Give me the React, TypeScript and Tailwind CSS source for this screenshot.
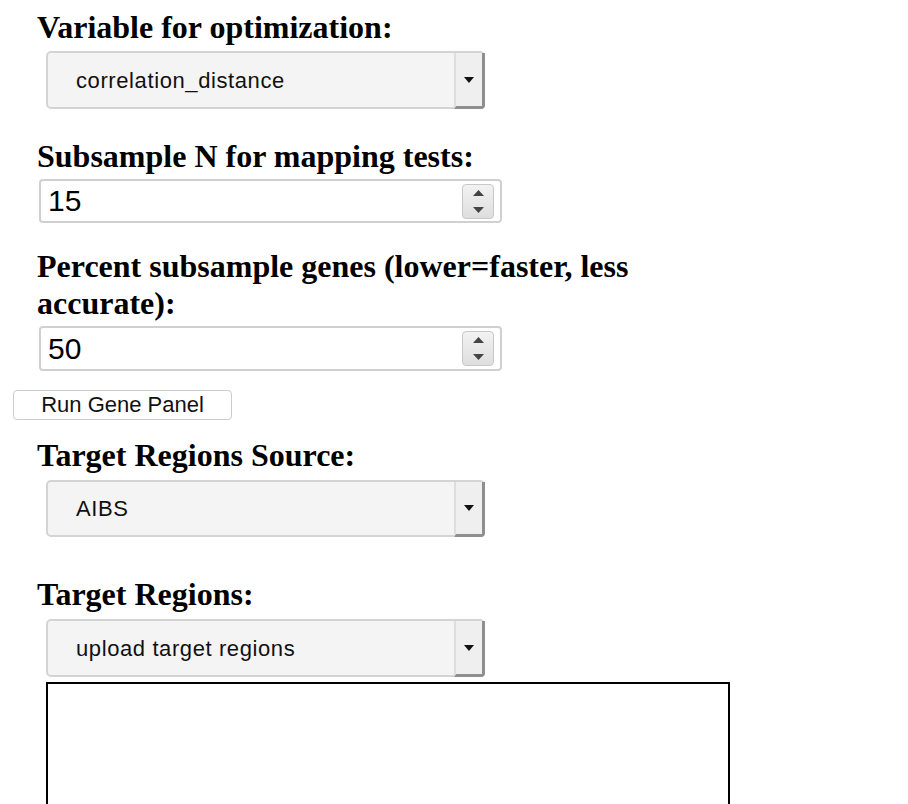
import React from 'react';

const headingClass =
  "ml-[37px] font-['Liberation_Serif',serif] text-[32px] leading-[37px] font-bold text-black";

const SelectBox: React.FC<{ value: string; className?: string }> = ({ value, className }) => (
  <div
    className={`ml-[46px] w-[439px] h-[58px] flex items-stretch rounded-[5px] border-2 border-[#d4d4d4] bg-[#f4f4f4] ${className ?? ''}`}
  >
    <div className="flex-1 flex items-center pl-[28px] font-['Liberation_Sans',Arial,sans-serif] text-[22px] tracking-[0.6px] text-[#111]">
      {value}
    </div>
    <div className="w-[31px] -mr-[2px] -mb-[2px] flex items-center justify-center border-l-2 border-l-[#dedede] border-r-[3px] border-b-[3px] border-r-[#8f8f8f] border-b-[#8f8f8f] rounded-br-[4px] bg-[#efefef]">
      <svg width="10" height="6" viewBox="0 0 10 6">
        <path d="M0 0h10L5 6z" fill="#111" />
      </svg>
    </div>
  </div>
);

const NumberBox: React.FC<{ value: string; className?: string }> = ({ value, className }) => (
  <div
    className={`ml-[39px] w-[463px] flex items-center justify-between rounded-[4px] border-2 border-[#d0d0d0] bg-white ${className ?? ''}`}
  >
    <span className="pl-[7px] font-['Liberation_Sans',Arial,sans-serif] text-[30px] leading-none text-black">
      {value}
    </span>
    <div className="mr-[6px] w-[32px] h-[35px] flex flex-col rounded-[4px] border border-[#c8c8c8] bg-gradient-to-b from-[#f2f2f2] to-[#dedede]">
      <div className="flex-1 flex items-center justify-center border-b border-[#e8e8e8]">
        <svg width="11" height="6" viewBox="0 0 11 6">
          <path d="M0 6L5.5 0l5.5 6z" fill="#444" />
        </svg>
      </div>
      <div className="flex-1 flex items-center justify-center">
        <svg width="11" height="6" viewBox="0 0 11 6">
          <path d="M0 0h11L5.5 6z" fill="#444" />
        </svg>
      </div>
    </div>
  </div>
);

export default function App() {
  return (
    <div className="w-[908px] h-[804px] overflow-hidden bg-white pt-[9px]">
      <h3 className={headingClass}>Variable for optimization:</h3>
      <SelectBox value="correlation_distance" className="mt-[5px]" />

      <h3 className={`${headingClass} mt-[29px]`}>Subsample N for mapping tests:</h3>
      <NumberBox value="15" className="mt-[4px] h-[44px]" />

      <h3 className={`${headingClass} mt-[25px] w-[700px]`}>
        Percent subsample genes (lower=faster, less accurate):
      </h3>
      <NumberBox value="50" className="mt-[4px] h-[45px]" />

      <button className="ml-[13px] mt-[19px] w-[219px] h-[30px] rounded-[4px] border border-[#cccccc] bg-white font-['Liberation_Sans',Arial,sans-serif] text-[22px] leading-none text-[#111]">
        Run Gene Panel
      </button>

      <h3 className={`${headingClass} mt-[17px]`}>Target Regions Source:</h3>
      <SelectBox value="AIBS" className="mt-[6px] !h-[57px]" />

      <h3 className={`${headingClass} mt-[39px]`}>Target Regions:</h3>
      <SelectBox value="upload target regions" className="mt-[6px]" />

      <div className="ml-[46px] mt-[5px] w-[684px] h-[200px] border-2 border-black bg-white" />
    </div>
  );
}
